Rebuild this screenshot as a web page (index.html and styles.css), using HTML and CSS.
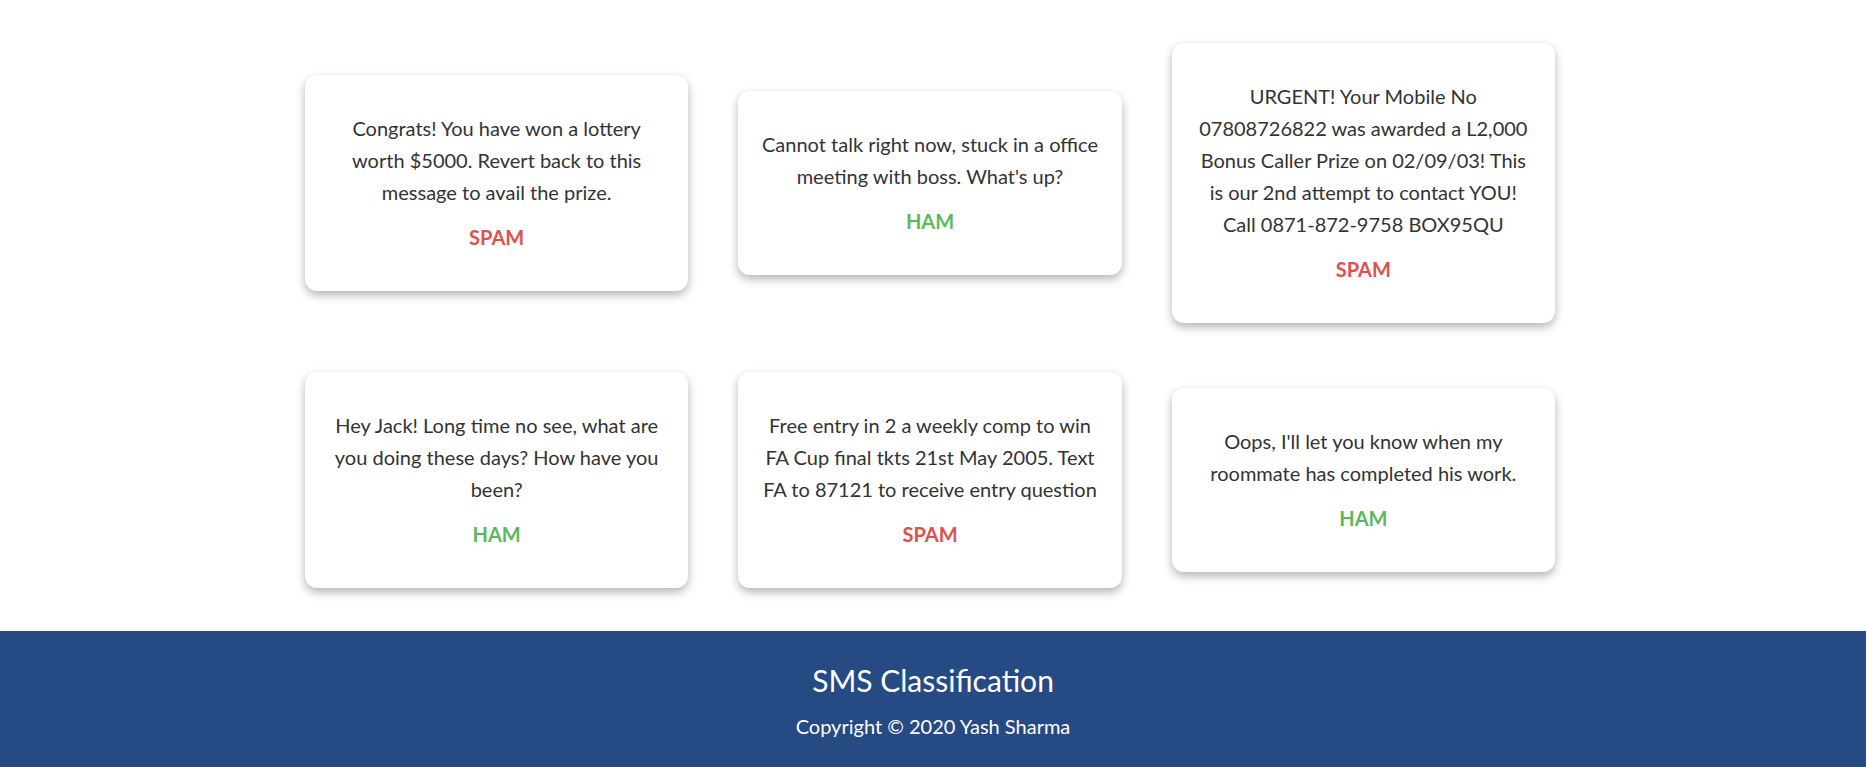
FILE: index.html
```html
<!DOCTYPE html>
<html lang="en">
<head>
<meta charset="utf-8">
<title>SMS Classification</title>
<link rel="stylesheet" href="styles.css">
</head>
<body>
<main class="grid">
  <div class="card">
    <p class="msg">Congrats! You have won a lottery worth $5000. Revert back to this message to avail the prize.</p>
    <div class="label spam">SPAM</div>
  </div>
  <div class="card">
    <p class="msg">Cannot talk right now, stuck in a office meeting with boss. What's up?</p>
    <div class="label ham">HAM</div>
  </div>
  <div class="card">
    <p class="msg">URGENT! Your Mobile No 07808726822 was awarded a L2,000 Bonus Caller Prize on 02/09/03! This is our 2nd attempt to contact YOU! Call 0871-872-9758 BOX95QU</p>
    <div class="label spam">SPAM</div>
  </div>
  <div class="card">
    <p class="msg">Hey Jack! Long time no see, what are you doing these days? How have you been?</p>
    <div class="label ham">HAM</div>
  </div>
  <div class="card">
    <p class="msg">Free entry in 2 a weekly comp to win FA Cup final tkts 21st May 2005. Text FA to 87121 to receive entry question</p>
    <div class="label spam">SPAM</div>
  </div>
  <div class="card">
    <p class="msg">Oops, I'll let you know when my roommate has completed his work.</p>
    <div class="label ham">HAM</div>
  </div>
</main>
<footer class="footer">
  <h3 class="footer-title">SMS Classification</h3>
  <p class="footer-copy">Copyright © 2020 Yash Sharma</p>
</footer>
</body>
</html>
```
FILE: styles.css
```css
* { box-sizing: border-box; }
html, body { margin: 0; padding: 0; }
body {
  font-family: Lato, "Open Sans", "Liberation Sans", sans-serif;
  color: #333;
  background: #fff;
}
.grid {
  width: 1250px;
  margin-left: 305px;
  padding: 43px 0 43px;
  display: grid;
  grid-template-columns: repeat(3, 1fr);
  column-gap: 50px;
  row-gap: 49px;
  align-items: center;
}
.card {
  background: #fff;
  border-radius: 12px;
  box-shadow: 0 4px 10px rgba(0, 0, 0, 0.3);
  padding: 37px 21px 42px;
  text-align: center;
}
.msg {
  margin: 0 0 17px;
  font-size: 20px;
  line-height: 32px;
}
.label {
  font-size: 20px;
  line-height: 24px;
  font-weight: 700;
}
.spam { color: #e0504f; }
.ham { color: #5cb85c; }
.footer {
  background: #264a84;
  color: #fff;
  text-align: center;
  padding: 31px 0 34px;
}
.footer-title {
  margin: 0 0 13px;
  font-size: 30px;
  font-weight: 400;
  line-height: 36px;
}
.footer-copy {
  margin: 0;
  font-size: 20px;
  line-height: 30px;
}
```
